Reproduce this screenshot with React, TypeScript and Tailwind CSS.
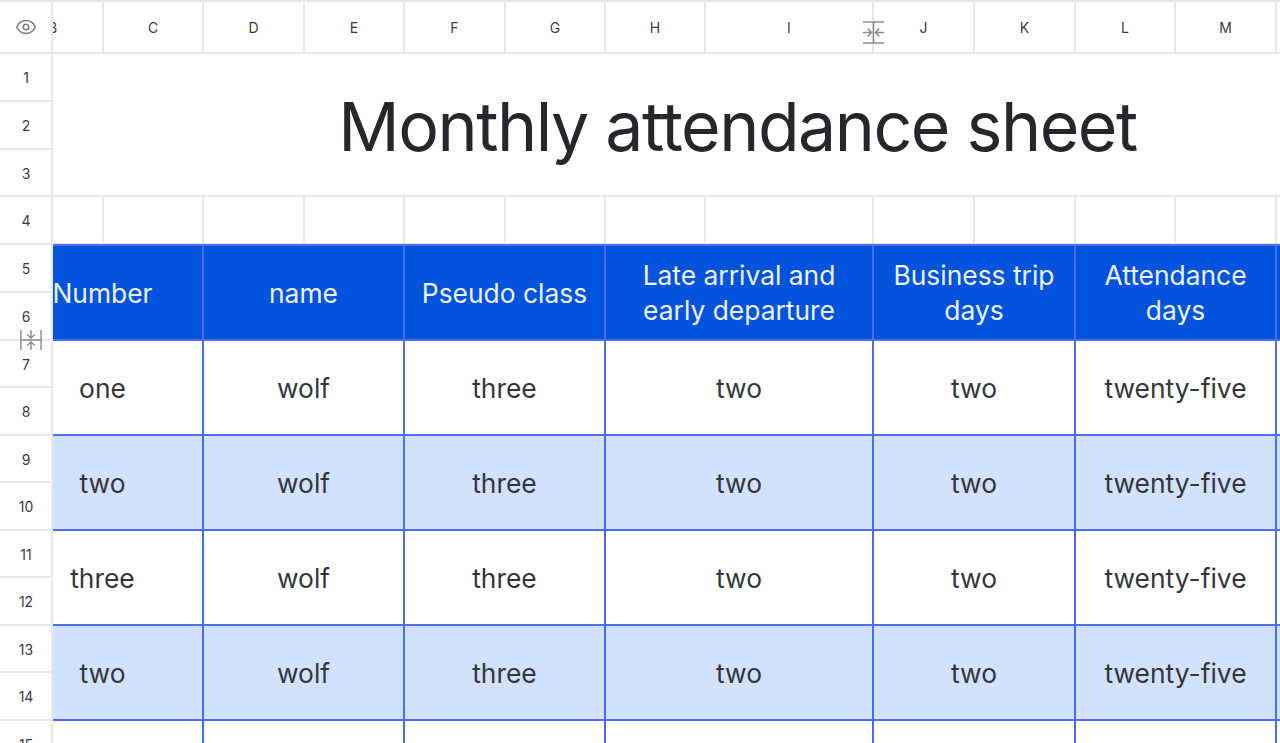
import { Eye } from "lucide-react";

const COLUMNS = ["C", "D", "E", "F", "G", "H", "I", "J", "K", "L", "M"];

const HEADERS = [
  { lines: ["Number"], span: "col-span-2 pr-[50px]" },
  { lines: ["name"], span: "col-span-2" },
  { lines: ["Pseudo class"], span: "col-span-2" },
  { lines: ["Late arrival and", "early departure"], span: "col-span-2" },
  { lines: ["Business trip", "days"], span: "col-span-2" },
  { lines: ["Attendance", "days"], span: "col-span-2" },
];

const ROWS = [
  { start: 7, first: "one", shaded: false },
  { start: 9, first: "two", shaded: true },
  { start: 11, first: "three", shaded: false },
  { start: 13, first: "two", shaded: true },
];

const VALUES = ["wolf", "three", "two", "two", "twenty-five"];

function RowLabel({ n }: { n: number }) {
  return (
    <div className="flex items-center justify-center border-r-2 border-b-2 border-[#e8e8e8] bg-white pt-px pl-px text-[14px] text-[#3a3d40]">
      {n}
    </div>
  );
}

function ResizeIcon({ className }: { className: string }) {
  return (
    <svg viewBox="0 0 24 24" fill="none" stroke="#8e8e8e" strokeWidth="1.6" className={className}>
      <path d="M1 1h22M1 23h22M12 1v22" />
      <path d="M1 12h9M6 8l4 4-4 4M23 12h-9M18 8l-4 4 4 4" />
    </svg>
  );
}

export default function App() {
  const cell = "flex items-center justify-center border-r-2 border-b-2 border-[#4f6cf5] pt-0.5";

  return (
    <div className="relative h-[743px] w-[1280px] overflow-hidden bg-white font-['Inter',sans-serif]">
      <div className="grid grid-cols-[53px_51px_100px_101px_100px_101px_100px_100px_168px_101px_101px_100px_101px_3px] grid-rows-[54px_48px_48px_47px_48px_48px_48px_47px_48px_47px_48px_47px_48px_47px_48px_47px]">
        {/* column letters */}
        <div className="flex items-center justify-center border-t-2 border-r-2 border-b-2 border-[#e8e8e8]">
          <Eye className="h-[22px] w-[22px] text-[#7d7d7d]" strokeWidth={1.7} />
        </div>
        <div className="flex items-center overflow-hidden border-t-2 border-r-2 border-b-2 border-[#e8e8e8] text-[14px] text-[#3a3d40]">
          <span className="-ml-[5px]">B</span>
        </div>
        {COLUMNS.map((c) => (
          <div key={c} className="flex items-center justify-center border-t-2 border-r-2 border-b-2 border-[#e8e8e8] text-[14px] text-[#3a3d40]">
            {c}
          </div>
        ))}
        <div className="border-t-2 border-b-2 border-[#e8e8e8]" />

        {/* title block */}
        <RowLabel n={1} />
        <div className="col-span-13 row-span-3 flex items-center justify-center border-b-2 border-[#e8e8e8] pt-0.5 pl-[142px] text-[68px] leading-none tracking-[-1.5px] whitespace-nowrap text-[#24282c]">
          Monthly attendance sheet
        </div>
        <RowLabel n={2} />
        <RowLabel n={3} />

        {/* empty row 4 */}
        <RowLabel n={4} />
        {["B", ...COLUMNS].map((c) => (
          <div key={c} className="border-r-2 border-b-2 border-[#e8e8e8]" />
        ))}
        <div className="border-b-2 border-[#e8e8e8]" />

        {/* table header */}
        <RowLabel n={5} />
        {HEADERS.map((h) => (
          <div
            key={h.lines[0]}
            className={`${h.span} row-span-2 ${cell} flex-col bg-[#0353dd] text-[26.400px] leading-[35px] whitespace-nowrap text-[#edf3ff]`}
          >
            {h.lines.map((line) => (
              <span key={line}>{line}</span>
            ))}
          </div>
        ))}
        <div className="row-span-2 border-b-2 border-[#4f6cf5] bg-[#0353dd]" />
        <RowLabel n={6} />

        {/* table body */}
        {ROWS.map((row) => {
          const bg = row.shaded ? "bg-[#d2e1fd]" : "bg-white";
          return [
            <RowLabel key={`l${row.start}`} n={row.start} />,
            <div key={`a${row.start}`} className={`col-span-2 row-span-2 ${cell} ${bg} pr-[50px] text-[26.400px] text-[#33373b]`}>
              {row.first}
            </div>,
            ...VALUES.map((v, i) => (
              <div key={`${row.start}-${i}`} className={`col-span-2 row-span-2 ${cell} ${bg} text-[26.400px] text-[#33373b]`}>
                {v}
              </div>
            )),
            <div key={`e${row.start}`} className={`row-span-2 border-b-2 border-[#4f6cf5] ${bg}`} />,
            <RowLabel key={`m${row.start}`} n={row.start + 1} />,
          ];
        })}

        {/* clipped last row */}
        <RowLabel n={15} />
        {VALUES.concat("").map((_, i) => (
          <div key={i} className="col-span-2 border-r-2 border-[#4f6cf5]" />
        ))}
      </div>

      <div className="absolute top-[244px] right-0 left-[53px] h-0.5 bg-[#4f6cf5]" />
      <ResizeIcon className="absolute top-[21px] left-[862px] h-[23px] w-[23px]" />
      <ResizeIcon className="absolute top-[329px] left-[20px] h-[22px] w-[22px] rotate-90" />
    </div>
  );
}
